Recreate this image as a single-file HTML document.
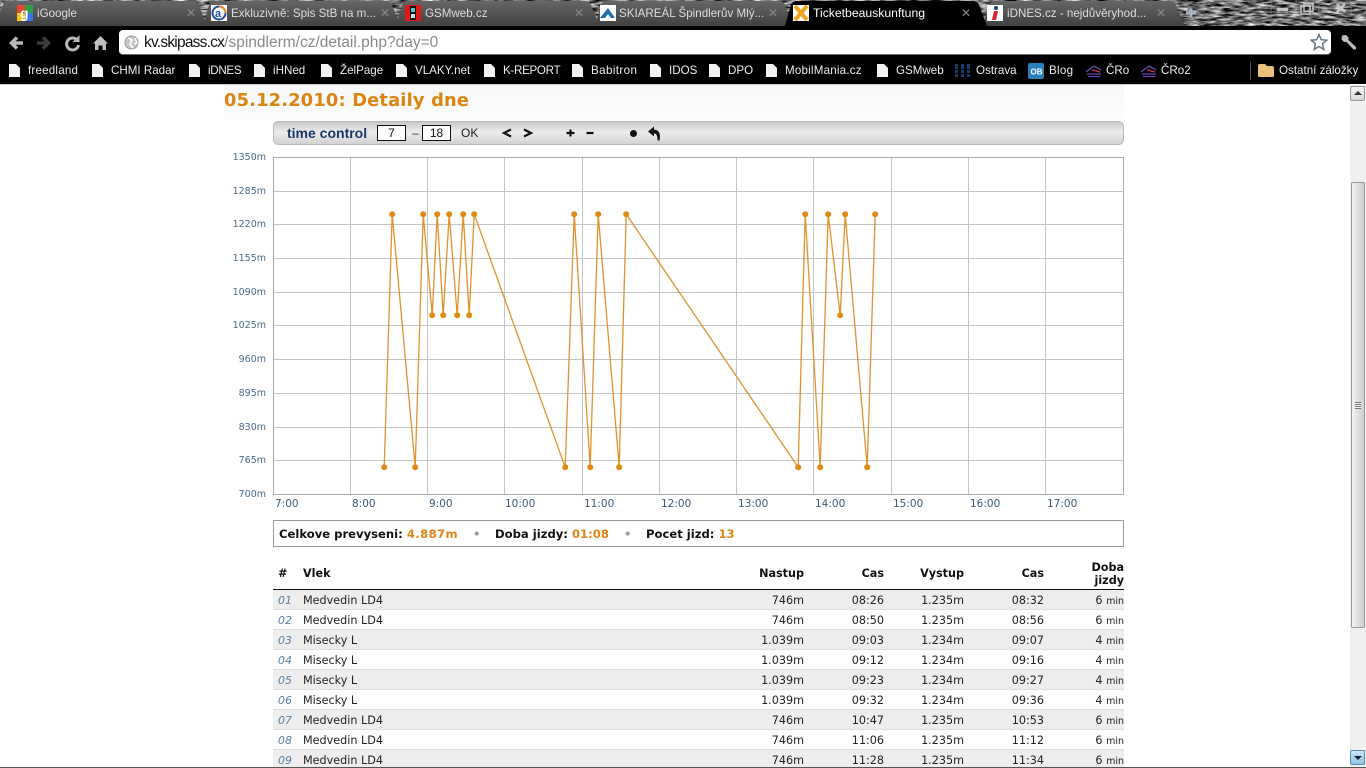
<!DOCTYPE html>
<html><head><meta charset="utf-8"><title>Ticketbeauskunftung</title>
<style>
html,body{margin:0;padding:0;width:1366px;height:768px;overflow:hidden;background:#fff}
body{position:relative;font-family:"DejaVu Sans","Liberation Sans",sans-serif}
.a{position:absolute;white-space:nowrap}
.ui{font-family:"Liberation Sans",sans-serif}
.tab{font:11.6px "Liberation Sans",sans-serif;color:#ddd;top:6px;height:15px;line-height:15px}
.x{font:12px "Liberation Sans",sans-serif;color:#8a8a8a;top:6px}
.bm{font:11.6px "Liberation Sans",sans-serif;color:#eee;top:64px;line-height:14px}
.yl{position:absolute;left:224px;width:42px;text-align:right;font-size:9.5px;color:#4a6a8a;line-height:12px}
.xl{position:absolute;top:498px;font-size:10.5px;color:#3a5a7a;line-height:13px}
.row{position:absolute;left:273px;width:851px;height:19px;border-bottom:1px solid #ddd;font-size:11.2px;line-height:22px;color:#222}
.row.g{background:#ededed}
.row span{position:absolute;top:0;white-space:nowrap}
.n{left:5px;font-style:italic;color:#5a7fa5;font-size:11px}
.v{left:30px}
.c1{right:320px}.c2{right:240px}.c3{right:160px}.c4{right:80px}.c5{right:0}
.c5 small{font-size:9.5px}
.th{position:absolute;font-size:11.2px;font-weight:bold;color:#111;line-height:13px;white-space:nowrap}
.sm{position:absolute;top:528px;font-size:11.6px;font-weight:bold;line-height:13px;color:#111;white-space:nowrap}
.sm span{color:#dd8516}
</style></head><body>

<!-- window frame texture -->
<svg class="a" style="left:0;top:0" width="1366" height="30">
<defs>
<filter id="gr" x="0" y="0" width="100%" height="100%" color-interpolation-filters="sRGB"><feTurbulence type="fractalNoise" baseFrequency="0.09 0.42" numOctaves="4" seed="7"/><feColorMatrix type="matrix" values="1.7 0 0 0 -0.42 1.7 0 0 0 -0.42 1.7 0 0 0 -0.42 0 0 0 0 1"/></filter>
<linearGradient id="tb" x1="0" y1="0" x2="0" y2="1"><stop offset="0" stop-color="#666"/><stop offset="1" stop-color="#404040"/></linearGradient>
</defs>
<rect width="1366" height="30" fill="#555"/>
<rect width="1366" height="30" filter="url(#gr)"/>
<g id="tabs">
<path d="M0 26V12L4 3Q5 1 9 1H193Q197 1 199 5L206 24V26Z" fill="url(#tb)"/>
<path d="M203 26L209 5Q210 1 215 1H386Q390 1 392 5L400 24V26Z" fill="url(#tb)"/>
<path d="M396 26L402 5Q403 1 408 1H585Q589 1 591 5L599 24V26Z" fill="url(#tb)"/>
<path d="M595 26L601 5Q602 1 607 1H779Q783 1 785 5L793 24V26Z" fill="url(#tb)"/>
<path d="M983 26L989 5Q990 1 995 1H1170Q1174 1 1176 5L1184 24V26Z" fill="url(#tb)"/>
</g>
<path d="M785 26L791 5Q792 1 797 1H973Q977 1 979 5L987 26Z" fill="#000"/>
<!-- new tab plus -->
<path d="M1186 13h10M1191 8.500v9" stroke="#aab4c4" stroke-width="3"/>
<!-- window controls -->
<path d="M1271 1V16M1296 1V16M1319 1V16M1351 1V16" stroke="#999" stroke-width="1" opacity=".6"/>
<rect x="1277" y="8" width="11" height="3" fill="#c4c4c4"/>
<rect x="1301" y="6" width="9" height="8" fill="none" stroke="#c4c4c4" stroke-width="1.500"/>
<rect x="1304" y="3.500" width="9" height="8" fill="none" stroke="#c4c4c4" stroke-width="1.500"/>
<path d="M1337 4L1345 12M1345 4L1337 12" stroke="#c8c8c8" stroke-width="2.500"/>
</svg>
<div class="a" style="left:0;top:26px;width:1366px;height:58px;background:#000"></div>

<!-- favicons -->
<svg class="a" style="left:17px;top:5px" width="16" height="16"><rect width="8" height="8" fill="#e2442f"/><rect x="8" width="8" height="8" fill="#2f9e44"/><rect y="8" width="8" height="8" fill="#f3c21b"/><rect x="8" y="8" width="8" height="8" fill="#3b78e7"/><text x="3" y="13" font-family="Liberation Sans" font-weight="bold" font-size="14" fill="#fff">g</text></svg>
<svg class="a" style="left:211px;top:5px" width="16" height="16"><rect width="16" height="16" fill="#fff"/><circle cx="8" cy="8" r="7.500" fill="#1d4d9e"/><path d="M8 .5A7.500 7.500 0 0 1 15.500 8H13A5 5 0 0 0 8 3Z" fill="#e8852a"/><circle cx="8" cy="8" r="5.500" fill="#fff"/><text x="4" y="12" font-family="Liberation Sans" font-weight="bold" font-size="11" fill="#1d4d9e">a</text></svg>
<svg class="a" style="left:405px;top:5px" width="16" height="16"><rect width="16" height="16" fill="#e01818"/><rect x="5" y="1" width="6" height="14" fill="#111"/><rect x="6" y="3" width="4" height="4" fill="#5cc"/><rect x="6" y="9" width="4" height="4" fill="#ddd"/></svg>
<svg class="a" style="left:600px;top:5px" width="16" height="16"><rect width="16" height="16" fill="#fff"/><path d="M0 13L8 3L15 13H11L8 9L5 13Z" fill="#1c6fb4"/></svg>
<svg class="a" style="left:793px;top:5px" width="16" height="16"><rect width="16" height="16" fill="#fff"/><path d="M2 1L14 15M14 1L2 15" stroke="#efa21e" stroke-width="4"/></svg>
<svg class="a" style="left:987px;top:5px" width="16" height="16"><rect width="16" height="16" fill="#fff"/><circle cx="9" cy="3" r="2" fill="#1d3f73"/><path d="M7 6L11 6L9 15L5 15Z" fill="#d9202c"/></svg>

<div class="a tab" style="left:37px">iGoogle</div><div class="a x" style="left:186px">✕</div>
<div class="a tab" style="left:231px">Exkluzivně: Spis StB na m...</div><div class="a x" style="left:380px">✕</div>
<div class="a tab" style="left:425px">GSMweb.cz</div><div class="a x" style="left:574px">✕</div>
<div class="a tab" style="left:619px">SKIAREÁL Špindlerův Mlý...</div><div class="a x" style="left:768px">✕</div>
<div class="a tab" style="left:813px;color:#fff;font-size:12.2px">Ticketbeauskunftung</div><div class="a x" style="left:961px">✕</div>
<div class="a tab" style="left:1007px">iDNES.cz - nejdůvěryhod...</div><div class="a x" style="left:1156px">✕</div>

<!-- toolbar icons -->
<svg class="a" style="left:0;top:28px" width="118" height="28">
<path d="M23 15H13M17 9.500L11.500 15L17 20.500" fill="none" stroke="#b8b8b8" stroke-width="3.500"/>
<path d="M37 15H47M43 9.500L48.500 15L43 20.500" fill="none" stroke="#3c3c3c" stroke-width="3.500"/>
<path d="M77.500 12.500A6 6 0 1 0 78.500 17" fill="none" stroke="#b8b8b8" stroke-width="3"/><path d="M79.500 7V14H72.500Z" fill="#b8b8b8"/>
<path d="M93 15.500L100.500 8L108 15.500H106V22H102.500V17.500H98.500V22H95V15.500Z" fill="#c0c0c0"/>
</svg>
<div class="a" style="left:119px;top:30px;width:1212px;height:25px;background:#fff;border-radius:4px;border-bottom:1px solid #666;box-sizing:border-box"></div>
<svg class="a" style="left:124px;top:35px" width="15" height="15"><circle cx="7.500" cy="7.500" r="6.500" fill="#c8c8c8" stroke="#999"/><path d="M4 3L8 5L6 9L9 13M11 3L13 8L10 9" fill="none" stroke="#fff" stroke-width="1.500"/></svg>
<div class="a ui" style="left:144px;top:34px;font-size:15.500px;line-height:18px;color:#888"><span style="color:#111;letter-spacing:-.77px">kv.skipass.cx</span>/spindlerm/cz/detail.php?day=0</div>
<svg class="a" style="left:1310px;top:33px" width="18" height="18"><path d="M9 1.500L11.200 6.700L16.800 7.200L12.500 10.900L13.800 16.400L9 13.500L4.200 16.400L5.500 10.900L1.200 7.200L6.800 6.700Z" fill="#fff" stroke="#6a7683" stroke-width="1.500"/></svg>
<svg class="a" style="left:1340px;top:33px" width="18" height="18"><path d="M2 2.500L6 2L8.500 4.500L8.500 7L16 14V16.500H13.500L6.500 9H4L1.500 6.500Z" fill="#bdbdbd"/></svg>

<!-- bookmarks -->
<svg class="a" style="left:0;top:62px" width="1366" height="18">
<g fill="#f2f2f2"><path d="M9 2H16L20 6V15H9Z"/>
<path d="M92 2H99L103 6V15H92Z"/><path d="M189 2H196L200 6V15H189Z"/><path d="M254 2H261L265 6V15H254Z"/><path d="M321 2H328L332 6V15H321Z"/><path d="M396 2H403L407 6V15H396Z"/><path d="M484 2H491L495 6V15H484Z"/><path d="M572 2H579L583 6V15H572Z"/><path d="M650 2H657L661 6V15H650Z"/><path d="M709 2H716L720 6V15H709Z"/><path d="M766 2H773L777 6V15H766Z"/><path d="M877 2H884L888 6V15H877Z"/></g>
<g fill="#123f70"><rect x="955" y="2" width="3" height="5"/><rect x="955" y="8" width="3" height="3"/><rect x="955" y="12" width="3" height="3"/><rect x="961" y="2" width="3" height="5"/><rect x="961" y="8" width="3" height="3"/><rect x="961" y="12" width="3" height="3"/><rect x="967" y="2" width="3" height="5"/><rect x="967" y="8" width="3" height="3"/><rect x="967" y="12" width="3" height="3"/></g>
<rect x="1028" y="1" width="16" height="16" rx="2" fill="#2a7fb8"/><text x="1030.500" y="12.500" font-family="Liberation Sans" font-weight="bold" font-size="8" fill="#fff">OB</text>
<path d="M1086 10L1094 4L1101 8M1087 12H1101M1088 14.500H1100" stroke="#6a45b0" stroke-width="1.300" fill="none"/><path d="M1092 8L1100 10" stroke="#c43a5a" stroke-width="1.300"/>
<path d="M1141 10L1149 4L1156 8M1142 12H1156M1143 14.500H1155" stroke="#6a45b0" stroke-width="1.300" fill="none"/><path d="M1147 8L1155 10" stroke="#c43a5a" stroke-width="1.300"/>
<rect x="1250" y="-3" width="1" height="22" fill="#555"/>
<path d="M1258 4Q1258 2 1260 2H1265L1267 4H1272Q1274 4 1274 6V14Q1274 15 1272 15H1260Q1258 15 1258 14Z" fill="#e8c27a"/>
</svg>
<div class="a bm" style="left:28px;letter-spacing:.2px">freedland</div>
<div class="a bm" style="left:111px">CHMI Radar</div>
<div class="a bm" style="left:208px;letter-spacing:-.3px">iDNES</div>
<div class="a bm" style="left:273px">iHNed</div>
<div class="a bm" style="left:340px">ŽelPage</div>
<div class="a bm" style="left:415px">VLAKY.net</div>
<div class="a bm" style="left:503px;letter-spacing:-.3px">K-REPORT</div>
<div class="a bm" style="left:591px;letter-spacing:.4px">Babitron</div>
<div class="a bm" style="left:669px">IDOS</div>
<div class="a bm" style="left:728px">DPO</div>
<div class="a bm" style="left:785px;letter-spacing:.2px">MobilMania.cz</div>
<div class="a bm" style="left:896px">GSMweb</div>
<div class="a bm" style="left:976px">Ostrava</div>
<div class="a bm" style="left:1049px;letter-spacing:.3px">Blog</div>
<div class="a bm" style="left:1106px">ČRo</div>
<div class="a bm" style="left:1161px">ČRo2</div>
<div class="a bm" style="left:1279px">Ostatní záložky</div>

<!-- page -->
<div class="a" style="left:0;top:84px;width:1350px;height:1px;background:#c9ccd4"></div>
<div class="a" style="left:224px;top:85px;width:900px;height:35px;background:linear-gradient(#f7f7f7,#fdfdfd)"></div>
<div class="a" style="left:224px;top:91px;font-size:17.8px;font-weight:bold;color:#db8412;line-height:20px;letter-spacing:.2px">05.12.2010: Detaily dne</div>

<!-- time control -->
<div class="a" style="left:273px;top:121px;width:851px;height:24px;box-sizing:border-box;border-radius:5px;border:1px solid #bbb;background:linear-gradient(#c9c9c9,#ececec 45%,#d2d2d2)"></div>
<div class="a ui" style="left:287px;top:126px;font-size:14px;font-weight:bold;color:#17376d;line-height:15px">time control</div>
<div class="a ui" style="left:377px;top:125px;width:29px;height:16px;box-sizing:border-box;border:1px solid #111;background:#fff;text-align:center;font-size:12px;line-height:14px;color:#111">7</div>
<div class="a ui" style="left:412px;top:126px;font-size:12px;line-height:14px;color:#333">–</div>
<div class="a ui" style="left:422px;top:125px;width:29px;height:16px;box-sizing:border-box;border:1px solid #111;background:#fff;text-align:center;font-size:12px;line-height:14px;color:#111">18</div>
<div class="a ui" style="left:461px;top:126px;font-size:12px;line-height:14px;color:#222">OK</div>
<svg class="a" style="left:495px;top:122px" width="175" height="22">
<path d="M16 7.500L9 11L16 14.500M29 7.500L36 11L29 14.500" fill="none" stroke="#111" stroke-width="2.200"/>
<path d="M71.500 11h8M75.500 7.500v7M91.500 11h7" stroke="#111" stroke-width="2.200"/>
<circle cx="138.500" cy="11.500" r="3.500" fill="#111"/>
<path d="M159 4.500L153 9.500L159 14.500V11.500Q162.500 11 162.500 18.500H164.500Q166.500 8 159 7.500Z" fill="#111"/>
</svg>

<!-- chart -->
<svg class="a" style="left:273px;top:157px" width="851" height="338">
<g transform="translate(-273,-157)">
<path d="M350.500 157V494M427.500 157V494M504.500 157V494M582.500 157V494M659.500 157V494M736.500 157V494M813.500 157V494M891.500 157V494M968.500 157V494M1045.500 157V494M273.500 191.500H1123M273.500 224.500H1123M273.500 258.500H1123M273.500 292.500H1123M273.500 325.500H1123M273.500 359.500H1123M273.500 393.500H1123M273.500 427.500H1123M273.500 460.500H1123" stroke="#c4c4c4" stroke-width="1" fill="none"/>
<rect x="273.500" y="157.500" width="850" height="337" fill="none" stroke="#aaa"/>
<g transform="translate(.2,.2)">
<polyline fill="none" stroke="#e0922e" stroke-width="1.300" points="384,467 392,214 415,467 423,214 432,315 437,214 443,315 449,214 457,315 463,214 469,315 474,214 565,467 574,214 590,467 598,214 619,467 626,214 798,467 805,214 820,467 828,214 840,315 845,214 867,467 875,214"/>
<g fill="#df8a14"><circle cx="384" cy="467" r="3"/><circle cx="392" cy="214" r="3"/><circle cx="415" cy="467" r="3"/><circle cx="423" cy="214" r="3"/><circle cx="432" cy="315" r="3"/><circle cx="437" cy="214" r="3"/><circle cx="443" cy="315" r="3"/><circle cx="449" cy="214" r="3"/><circle cx="457" cy="315" r="3"/><circle cx="463" cy="214" r="3"/><circle cx="469" cy="315" r="3"/><circle cx="474" cy="214" r="3"/><circle cx="565" cy="467" r="3"/><circle cx="574" cy="214" r="3"/><circle cx="590" cy="467" r="3"/><circle cx="598" cy="214" r="3"/><circle cx="619" cy="467" r="3"/><circle cx="626" cy="214" r="3"/><circle cx="798" cy="467" r="3"/><circle cx="805" cy="214" r="3"/><circle cx="820" cy="467" r="3"/><circle cx="828" cy="214" r="3"/><circle cx="840" cy="315" r="3"/><circle cx="845" cy="214" r="3"/><circle cx="867" cy="467" r="3"/><circle cx="875" cy="214" r="3"/></g>
</g>
</g></svg>
<div class="yl" style="top:152px">1350m</div><div class="yl" style="top:186px">1285m</div><div class="yl" style="top:219px">1220m</div><div class="yl" style="top:253px">1155m</div><div class="yl" style="top:287px">1090m</div><div class="yl" style="top:320px">1025m</div><div class="yl" style="top:354px">960m</div><div class="yl" style="top:388px">895m</div><div class="yl" style="top:422px">830m</div><div class="yl" style="top:455px">765m</div><div class="yl" style="top:489px">700m</div>
<div class="xl" style="left:275px">7:00</div><div class="xl" style="left:352px">8:00</div><div class="xl" style="left:429px">9:00</div><div class="xl" style="left:505px">10:00</div><div class="xl" style="left:584px">11:00</div><div class="xl" style="left:661px">12:00</div><div class="xl" style="left:738px">13:00</div><div class="xl" style="left:815px">14:00</div><div class="xl" style="left:893px">15:00</div><div class="xl" style="left:970px">16:00</div><div class="xl" style="left:1047px">17:00</div>

<!-- summary -->
<div class="a" style="left:273px;top:520px;width:851px;height:27px;box-sizing:border-box;border:1px solid #999"></div>
<div class="sm" style="left:279px">Celkove prevyseni: <span style="letter-spacing:.4px">4.887m</span></div>
<div class="sm" style="left:473px;color:#999">•</div>
<div class="sm" style="left:495px">Doba jizdy: <span>01:08</span></div>
<div class="sm" style="left:624px;color:#999">•</div>
<div class="sm" style="left:646px">Pocet jizd: <span>13</span></div>

<!-- table head -->
<div class="th" style="left:278px;top:567px">#</div>
<div class="th" style="left:303px;top:567px">Vlek</div>
<div class="th" style="right:562px;top:567px">Nastup</div>
<div class="th" style="right:482px;top:567px">Cas</div>
<div class="th" style="right:402px;top:567px">Vystup</div>
<div class="th" style="right:322px;top:567px">Cas</div>
<div class="th" style="right:242px;top:561px;text-align:right">Doba<br>jizdy</div>
<div class="a" style="left:273px;top:589px;width:851px;height:1px;background:#111"></div>

<div class="row g" style="top:590px"><span class="n">01</span><span class="v">Medvedin LD4</span><span class="c1">746m</span><span class="c2">08:26</span><span class="c3">1.235m</span><span class="c4">08:32</span><span class="c5">6 <small>min</small></span></div>
<div class="row" style="top:610px"><span class="n">02</span><span class="v">Medvedin LD4</span><span class="c1">746m</span><span class="c2">08:50</span><span class="c3">1.235m</span><span class="c4">08:56</span><span class="c5">6 <small>min</small></span></div>
<div class="row g" style="top:630px"><span class="n">03</span><span class="v">Misecky L</span><span class="c1">1.039m</span><span class="c2">09:03</span><span class="c3">1.234m</span><span class="c4">09:07</span><span class="c5">4 <small>min</small></span></div>
<div class="row" style="top:650px"><span class="n">04</span><span class="v">Misecky L</span><span class="c1">1.039m</span><span class="c2">09:12</span><span class="c3">1.234m</span><span class="c4">09:16</span><span class="c5">4 <small>min</small></span></div>
<div class="row g" style="top:670px"><span class="n">05</span><span class="v">Misecky L</span><span class="c1">1.039m</span><span class="c2">09:23</span><span class="c3">1.234m</span><span class="c4">09:27</span><span class="c5">4 <small>min</small></span></div>
<div class="row" style="top:690px"><span class="n">06</span><span class="v">Misecky L</span><span class="c1">1.039m</span><span class="c2">09:32</span><span class="c3">1.234m</span><span class="c4">09:36</span><span class="c5">4 <small>min</small></span></div>
<div class="row g" style="top:710px"><span class="n">07</span><span class="v">Medvedin LD4</span><span class="c1">746m</span><span class="c2">10:47</span><span class="c3">1.235m</span><span class="c4">10:53</span><span class="c5">6 <small>min</small></span></div>
<div class="row" style="top:730px"><span class="n">08</span><span class="v">Medvedin LD4</span><span class="c1">746m</span><span class="c2">11:06</span><span class="c3">1.235m</span><span class="c4">11:12</span><span class="c5">6 <small>min</small></span></div>
<div class="row g" style="top:750px"><span class="n">09</span><span class="v">Medvedin LD4</span><span class="c1">746m</span><span class="c2">11:28</span><span class="c3">1.235m</span><span class="c4">11:34</span><span class="c5">6 <small>min</small></span></div>

<!-- scrollbar -->
<div class="a" style="left:1350px;top:85px;width:16px;height:683px;background:#f0f0f0"></div>
<div class="a" style="left:1350px;top:86px;width:15px;height:15px;box-sizing:border-box;border:1px solid #999;border-radius:2px;background:linear-gradient(#f4f4f4,#d8d8d8)"></div>
<div class="a" style="left:1354px;top:91px;width:0;height:0;border:4px solid transparent;border-top:0;border-bottom:4px solid #333"></div>
<div class="a" style="left:1351px;top:182px;width:14px;height:446px;box-sizing:border-box;border:1px solid #999;border-radius:2px;background:linear-gradient(90deg,#f4f4f4,#dcdcdc 60%,#cfcfcf)"></div>
<div class="a" style="left:1355px;top:402px;width:6px;height:7px;background:repeating-linear-gradient(#777 0 1px,#eee 1px 2px)"></div>
<div class="a" style="left:1350px;top:750px;width:15px;height:15px;box-sizing:border-box;border:1px solid #5a8fb5;border-radius:2px;background:linear-gradient(#cde6f5,#8fc2e2)"></div>
<div class="a" style="left:1354px;top:756px;width:0;height:0;border:4px solid transparent;border-bottom:0;border-top:4px solid #123"></div>
<div class="a" style="left:0;top:767px;width:1366px;height:1px;background:#555"></div>
</body></html>
